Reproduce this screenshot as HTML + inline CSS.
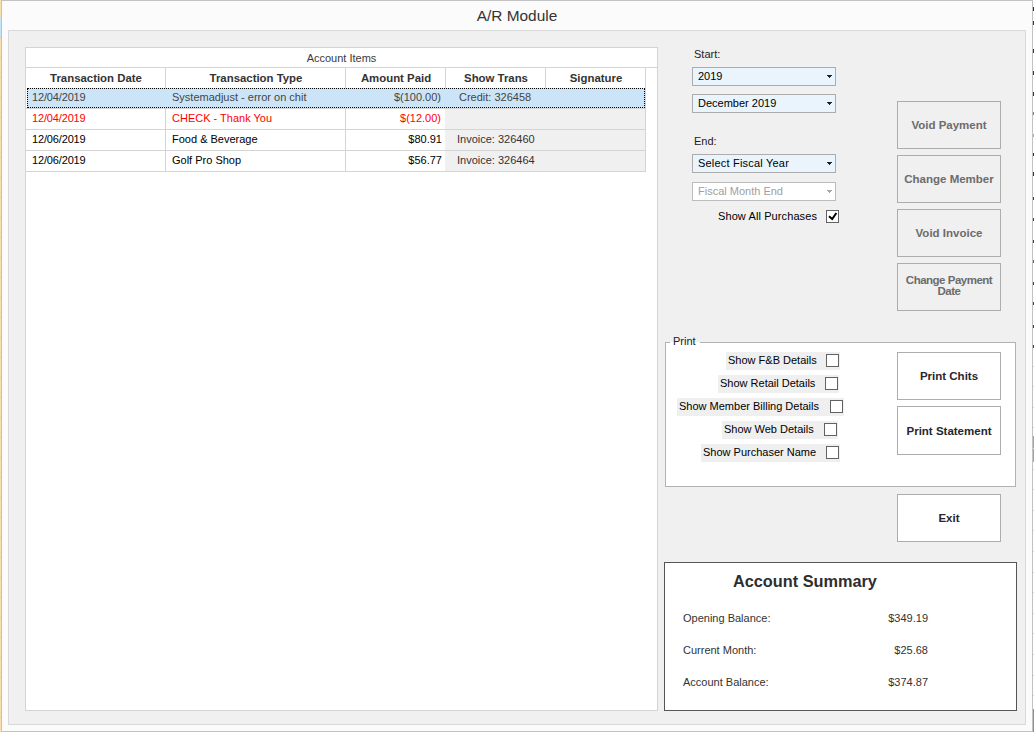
<!DOCTYPE html>
<html>
<head>
<meta charset="utf-8">
<title>A/R Module</title>
<style>
html,body{margin:0;padding:0;}
body{width:1034px;height:732px;overflow:hidden;background:#fff;font-family:"Liberation Sans",sans-serif;font-size:11px;color:#000;position:relative;}
.abs{position:absolute;box-sizing:border-box;}
#win{left:1px;top:0;width:1032px;height:732px;border:1px solid #c2c2c2;background:#fbfbfb;}
#leftstrip{left:0;top:0;width:1px;height:732px;background:repeating-linear-gradient(to bottom,#f9deae 0,#f9deae 19px,#d4d0c8 19px,#d4d0c8 20px);background-position:0 -2px;}
#rightstrip{left:1033px;top:0;width:1px;height:732px;background:#fff;}
.mk{position:absolute;left:1033px;width:1px;}
#title{left:0;top:7px;width:1034px;text-align:center;font-size:15.4px;color:#333;font-family:"Liberation Sans",sans-serif;}
#panel{left:8px;top:30px;width:1018px;height:695px;background:#f0f0f0;border:1px solid #d9d9d9;}
#grid{left:25px;top:47px;width:633px;height:664px;background:#fff;border:1px solid #d4d4d4;}
.t{position:absolute;white-space:nowrap;line-height:13px;}
.hl{position:absolute;background:#d4d4d4;}
.b{font-weight:bold;}
.hdr{position:absolute;top:69px;height:19px;line-height:19px;text-align:center;font-weight:bold;color:#333;}
.cell{position:absolute;height:20px;line-height:18px;white-space:nowrap;}
.btn{position:absolute;box-sizing:border-box;border:1px solid #adadad;display:flex;align-items:center;justify-content:center;text-align:center;font-weight:bold;line-height:12px;}
.btn.dis{background:#f0f0f0;color:#6c6c6c;}
.btn.en{background:#fff;color:#262630;}
.combo{position:absolute;box-sizing:border-box;height:19px;border:1px solid #adadad;background:#eaf4fc;line-height:17px;padding-left:5px;font-size:11px;}
.combo.dis{background:#fff;color:#a0a0a0;border-color:#bcbcbc;}
.arrow{position:absolute;left:134px;top:7px;width:5px;height:3px;background:linear-gradient(#222,#222) 0 0/5px 1px no-repeat,linear-gradient(#222,#222) 1px 1px/3px 1px no-repeat,linear-gradient(#222,#222) 2px 2px/1px 1px no-repeat;}
.combo.dis .arrow{background:linear-gradient(#a6a6a6,#a6a6a6) 0 0/5px 1px no-repeat,linear-gradient(#a6a6a6,#a6a6a6) 1px 1px/3px 1px no-repeat,linear-gradient(#a6a6a6,#a6a6a6) 2px 2px/1px 1px no-repeat;}
.cb{position:absolute;box-sizing:border-box;width:13px;height:13px;border:1px solid #626262;background:#fff;}
.lbl{position:absolute;white-space:nowrap;font-size:11px;line-height:14px;}
</style>
</head>
<body>
<div id="win" class="abs"></div>
<div id="leftstrip" class="abs"></div>
<div id="rightstrip" class="abs"></div>
<div class="mk" style="top:7px;height:4px;background:#2a1a5a;"></div><div class="mk" style="top:21px;height:4px;background:#3a3060;"></div><div class="mk" style="top:49px;height:4px;background:#2a2a6a;"></div><div class="mk" style="top:71px;height:4px;background:#33306a;"></div><div class="mk" style="top:92px;height:4px;background:#2a2a6a;"></div><div class="mk" style="top:112px;height:3px;background:#e0507a;"></div><div class="mk" style="top:134px;height:3px;background:#8ab4f0;"></div><div class="mk" style="top:153px;height:3px;background:#2a2a6a;"></div><div class="mk" style="top:172px;height:4px;background:#2a2a6a;"></div><div class="mk" style="top:197px;height:3px;background:#3a3a7a;"></div><div class="mk" style="top:218px;height:3px;background:#3a3a7a;"></div><div class="mk" style="top:240px;height:3px;background:#3a3a7a;"></div><div class="mk" style="top:260px;height:3px;background:#c04040;"></div><div class="mk" style="top:282px;height:3px;background:#3a3a7a;"></div><div class="mk" style="top:302px;height:3px;background:#3a3a7a;"></div><div class="mk" style="top:325px;height:3px;background:#3a3a7a;"></div><div class="mk" style="top:345px;height:3px;background:#3a3a7a;"></div><div class="mk" style="top:436px;height:26px;background:#a0a4a8;"></div><div class="mk" style="top:709px;height:23px;background:#8a9096;"></div>
<div class="mk" style="top:366px;height:1px;background:#d8d8d8;"></div><div class="mk" style="top:386px;height:1px;background:#d8d8d8;"></div><div class="mk" style="top:407px;height:1px;background:#d8d8d8;"></div><div class="mk" style="top:427px;height:1px;background:#d8d8d8;"></div><div class="mk" style="top:448px;height:1px;background:#d8d8d8;"></div><div class="mk" style="top:469px;height:1px;background:#d8d8d8;"></div><div class="mk" style="top:489px;height:1px;background:#d8d8d8;"></div><div class="mk" style="top:510px;height:1px;background:#d8d8d8;"></div><div class="mk" style="top:530px;height:1px;background:#d8d8d8;"></div><div class="mk" style="top:551px;height:1px;background:#d8d8d8;"></div><div class="mk" style="top:572px;height:1px;background:#d8d8d8;"></div><div class="mk" style="top:592px;height:1px;background:#d8d8d8;"></div><div class="mk" style="top:613px;height:1px;background:#d8d8d8;"></div><div class="mk" style="top:633px;height:1px;background:#d8d8d8;"></div><div class="mk" style="top:654px;height:1px;background:#d8d8d8;"></div><div class="mk" style="top:675px;height:1px;background:#d8d8d8;"></div><div class="mk" style="top:695px;height:1px;background:#d8d8d8;"></div>
<div class="abs" style="left:0;top:17px;width:1px;height:20px;background:#c5e3f7;"></div>
<div id="title" class="abs">A/R Module</div>
<div id="panel" class="abs"></div>
<div id="grid" class="abs"></div>

<!-- grid caption -->
<div class="t" style="left:26px;top:52px;width:631px;text-align:center;font-size:11px;color:#3a3a3a;">Account Items</div>
<div class="hl" style="left:26px;top:67px;width:631px;height:1px;"></div>
<!-- header -->
<div class="hdr" style="left:26px;width:140px;font-size:11.4px;">Transaction Date</div>
<div class="hdr" style="left:166px;width:180px;font-size:11.4px;">Transaction Type</div>
<div class="hdr" style="left:346px;width:100px;font-size:11.4px;">Amount Paid</div>
<div class="hdr" style="left:446px;width:100px;font-size:11.4px;">Show Trans</div>
<div class="hdr" style="left:546px;width:100px;font-size:11.4px;">Signature</div>
<div class="hl" style="left:165px;top:68px;width:1px;height:103px;"></div>
<div class="hl" style="left:345px;top:68px;width:1px;height:103px;"></div>
<div class="hl" style="left:445px;top:68px;width:1px;height:20px;"></div>
<div class="hl" style="left:545px;top:68px;width:1px;height:20px;"></div>
<div class="hl" style="left:645px;top:68px;width:1px;height:103px;"></div>

<!-- button-cell gray bg -->
<div class="abs" style="left:445px;top:109px;width:200px;height:62px;background:#f0f0f0;"></div>
<!-- row lines -->
<div class="hl" style="left:26px;top:108px;width:620px;height:1px;"></div>
<div class="hl" style="left:26px;top:129px;width:620px;height:1px;"></div>
<div class="hl" style="left:26px;top:150px;width:620px;height:1px;"></div>
<div class="hl" style="left:26px;top:171px;width:620px;height:1px;"></div>

<!-- selected row -->
<div class="abs" style="left:27px;top:88px;width:618px;height:20px;background:#cce4f7;border:1px dotted #000;"></div>

<!-- row 1 -->
<div class="cell" style="left:32px;letter-spacing:-0.15px;top:88px;font-size:11px;color:#444;">12/04/2019</div>
<div class="cell" style="left:172px;top:88px;font-size:11px;color:#444;">Systemadjust - error on chit</div>
<div class="cell" style="left:346px;top:88px;width:95px;text-align:right;font-size:11px;color:#444;">$(100.00)</div>
<div class="cell" style="left:459px;top:88px;font-size:11px;color:#444;">Credit: 326458</div>
<!-- row 2 -->
<div class="cell" style="left:32px;letter-spacing:-0.15px;top:109px;font-size:11px;color:#f00;">12/04/2019</div>
<div class="cell" style="left:172px;top:109px;font-size:11px;color:#f00;">CHECK - Thank You</div>
<div class="cell" style="left:346px;top:109px;width:95px;text-align:right;font-size:11px;color:#f00;">$(12.00)</div>
<!-- row 3 -->
<div class="cell" style="left:32px;letter-spacing:-0.15px;top:130px;font-size:11px;">12/06/2019</div>
<div class="cell" style="left:172px;top:130px;font-size:11px;">Food &amp; Beverage</div>
<div class="cell" style="left:346px;top:130px;width:96px;text-align:right;font-size:11px;">$80.91</div>
<div class="cell" style="left:457px;top:130px;font-size:11px;color:#333;">Invoice: 326460</div>
<!-- row 4 -->
<div class="cell" style="left:32px;letter-spacing:-0.15px;top:151px;font-size:11px;">12/06/2019</div>
<div class="cell" style="left:172px;top:151px;font-size:11px;">Golf Pro Shop</div>
<div class="cell" style="left:346px;top:151px;width:96px;text-align:right;font-size:11px;">$56.77</div>
<div class="cell" style="left:457px;top:151px;font-size:11px;color:#333;">Invoice: 326464</div>

<!-- right controls -->
<div class="lbl" style="left:694px;top:47px;color:#222;">Start:</div>
<div class="combo" style="left:692px;top:67px;width:144px;">2019<span class="arrow"></span></div>
<div class="combo" style="left:692px;top:94px;width:144px;">December 2019<span class="arrow"></span></div>
<div class="lbl" style="left:694px;top:134px;color:#222;">End:</div>
<div class="combo" style="left:692px;top:154px;width:144px;letter-spacing:0.2px;">Select Fiscal Year<span class="arrow"></span></div>
<div class="combo dis" style="left:692px;top:182px;width:144px;">Fiscal Month End<span class="arrow"></span></div>
<div class="lbl" style="left:718px;top:209px;letter-spacing:0.1px;">Show All Purchases</div>
<div class="cb" style="left:826px;top:210px;"><svg width="11" height="11" viewBox="0 0 11 11" style="position:absolute;left:0;top:0"><path d="M2.0 5.3 L5.2 8.1 L9.4 2.0" stroke="#000" stroke-width="2" fill="none"/></svg></div>

<div class="btn dis" style="left:897px;top:101px;width:104px;height:48px;font-size:11.5px;">Void Payment</div>
<div class="btn dis" style="left:897px;top:155px;width:104px;height:48px;font-size:11.5px;">Change Member</div>
<div class="btn dis" style="left:897px;top:209px;width:104px;height:48px;font-size:11.5px;">Void Invoice</div>
<div class="btn dis" style="left:897px;top:263px;width:104px;height:48px;font-size:11.5px;letter-spacing:-0.5px;line-height:11.5px;padding-bottom:2px;">Change Payment<br>Date</div>

<!-- print group -->
<div class="abs" style="left:665px;top:342px;width:351px;height:145px;background:#fff;border:1px solid #b2b2b2;"></div>
<div class="lbl" style="left:670px;top:334px;width:30px;box-sizing:border-box;background:linear-gradient(to bottom,#f0f0f0 0,#f0f0f0 8px,#fff 8px,#fff 100%);padding:0 0 0 3px;color:#222;">Print</div>

<div class="abs" style="left:726px;top:352px;width:114px;height:18px;background:#efefef;"></div>
<div class="lbl" style="left:728px;top:353px;">Show F&amp;B Details</div>
<div class="cb" style="left:826px;top:354px;"></div>
<div class="abs" style="left:718px;top:375px;width:121px;height:18px;background:#efefef;"></div>
<div class="lbl" style="left:720px;top:376px;">Show Retail Details</div>
<div class="cb" style="left:825px;top:377px;"></div>
<div class="abs" style="left:677px;top:398px;width:167px;height:18px;background:#efefef;"></div>
<div class="lbl" style="left:679px;top:399px;">Show Member Billing Details</div>
<div class="cb" style="left:830px;top:400px;"></div>
<div class="abs" style="left:722px;top:421px;width:116px;height:18px;background:#efefef;"></div>
<div class="lbl" style="left:724px;top:422px;">Show Web Details</div>
<div class="cb" style="left:824px;top:423px;"></div>
<div class="abs" style="left:701px;top:444px;width:139px;height:18px;background:#efefef;"></div>
<div class="lbl" style="left:703px;top:445px;">Show Purchaser Name</div>
<div class="cb" style="left:826px;top:446px;"></div>

<div class="btn en" style="left:897px;top:352px;width:104px;height:48px;font-size:11.5px;">Print Chits</div>
<div class="btn en" style="left:897px;top:406px;width:104px;height:49px;font-size:11.5px;">Print Statement</div>
<div class="btn en" style="left:897px;top:494px;width:104px;height:48px;font-size:11.5px;">Exit</div>

<!-- account summary -->
<div class="abs" style="left:664px;top:562px;width:353px;height:149px;background:#fff;border:1px solid #555;"></div>
<div class="t b" style="left:733px;top:571px;font-size:16.3px;line-height:20px;color:#2e2e2e;">Account Summary</div>
<div class="lbl" style="left:683px;top:611px;color:#333;">Opening Balance:</div>
<div class="lbl" style="left:860px;top:611px;width:68px;text-align:right;color:#333;">$349.19</div>
<div class="lbl" style="left:683px;top:643px;color:#333;">Current Month:</div>
<div class="lbl" style="left:860px;top:643px;width:68px;text-align:right;color:#333;">$25.68</div>
<div class="lbl" style="left:683px;top:675px;color:#333;">Account Balance:</div>
<div class="lbl" style="left:860px;top:675px;width:68px;text-align:right;color:#333;">$374.87</div>
</body>
</html>
